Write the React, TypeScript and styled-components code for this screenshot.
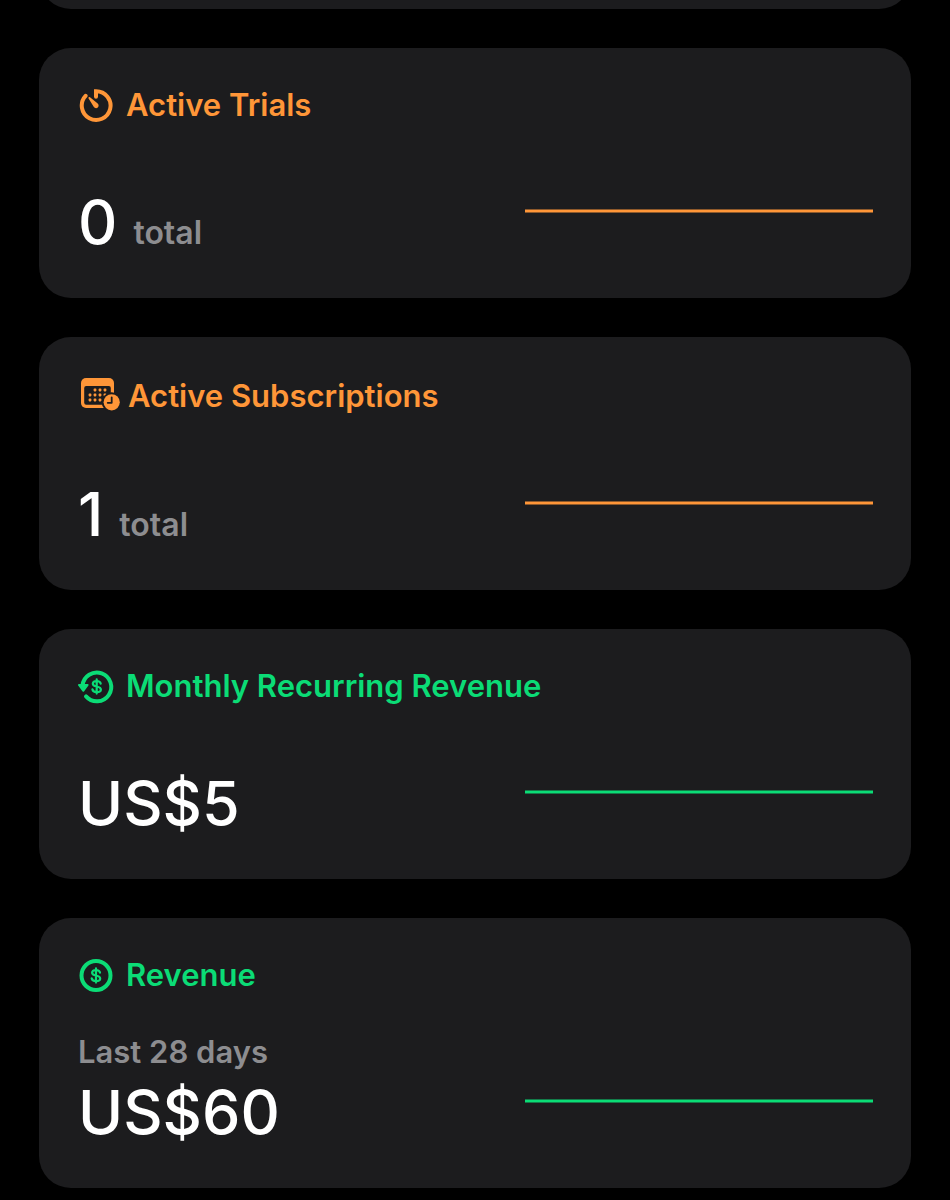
import React from "react";
import styled, { createGlobalStyle } from "styled-components";

const ORANGE = "#ff9638";
const GREEN = "#0bdc76";
const SURFACE = "#1c1c1e";

const GlobalStyle = createGlobalStyle`
  *, *::before, *::after {
    box-sizing: border-box;
  }
  body {
    margin: 0;
    background: #000;
    color: #fff;
    font-family: Inter, "Liberation Sans", sans-serif;
  }
`;

const Page = styled.main`
  display: flex;
  flex-direction: column;
  gap: 39px;
  padding: 0 39px 39px;
`;

const ScrolledAway = styled.div`
  display: flex;
  align-items: flex-end;
  height: 9px;
  overflow: hidden;
`;

const Card = styled.section`
  padding: 39px 38px 39px 39px;
  border-radius: 32px;
  background: ${SURFACE};
`;

const CardEdge = styled.div`
  flex: 1;
  height: 80px;
  border-radius: 32px;
  background: ${SURFACE};
`;

const Heading = styled.h2<{ $color: string }>`
  display: flex;
  align-items: center;
  gap: 8px;
  margin: 0 0 40px;
  color: ${(p) => p.$color};
  font-size: 31px;
  font-weight: 600;
  line-height: 36px;
`;

const Icon = styled.svg`
  display: block;
  flex: none;
`;

const Body = styled.div`
  display: flex;
  align-items: flex-end;
  justify-content: space-between;
`;

const Period = styled.p`
  margin: 0 0 4px;
  color: #8d8d90;
  font-size: 31px;
  font-weight: 600;
  line-height: 38px;
`;

const Amount = styled.p`
  display: flex;
  align-items: baseline;
  gap: 16px;
  margin: 0;
  font-size: 61px;
  font-weight: 500;
  line-height: 74px;
`;

const Unit = styled.span`
  color: #8d8d90;
  font-size: 32px;
  font-weight: 600;
  line-height: 38px;
`;

const Chart = styled.svg`
  display: block;
  flex: none;
  width: 43.8%;
  height: 96px;
`;

function TimerIcon() {
  return (
    <Icon width="40" height="36" viewBox="0 0 40 36" fill="none" aria-hidden="true">
      <path
        d="M7.6 8.8A14.4 14.4 0 1 0 18 4.200v5.600"
        stroke="currentColor"
        strokeWidth="4"
        strokeLinecap="round"
        strokeLinejoin="miter"
      />
      <path
        d="M12 10.2c-.9-.8-2.1.3-1.4 1.3l5.100 8.300c1 1.600 2.900 1.800 4.100.700 1.200-1.200 1.100-3.200-.400-4.300z"
        fill="currentColor"
      />
    </Icon>
  );
}

function CalendarClockIcon() {
  const dots = [
    [17, 14], [22, 14], [27, 14],
    [12, 19], [17, 19], [22, 19], [27, 19],
    [12, 24], [17, 24], [22, 24],
  ];
  return (
    <Icon width="42" height="39" viewBox="0 0 42 39" fill="none" aria-hidden="true">
      <rect x="3" y="2" width="33" height="30" rx="5" fill="currentColor" />
      <rect x="6.200" y="10" width="26.600" height="18.800" rx="2" fill={SURFACE} />
      {dots.map(([x, y]) => (
        <rect key={`${x}-${y}`} x={x - 1.4} y={y - 1.4} width="2.800" height="2.800" rx=".8" fill="currentColor" />
      ))}
      <circle cx="33.700" cy="26.300" r="10" fill={SURFACE} />
      <circle cx="33.700" cy="26.300" r="8.100" fill="currentColor" />
      <path
        d="M33.700 21.300v5.500h-4"
        stroke={SURFACE}
        strokeWidth="1.800"
        strokeLinecap="round"
        strokeLinejoin="round"
      />
    </Icon>
  );
}

function DollarMark() {
  return (
    <path
      d="M18 11.400v14.200M22 15.600c-.3-1.700-1.900-2.600-4-2.600-2.300 0-3.900 1-3.900 2.700 0 1.600 1.200 2.200 3.900 2.800 2.900.6 4.200 1.200 4.200 2.900 0 1.700-1.700 2.700-4.200 2.700-2.400 0-4-1-4.300-2.800"
      stroke="currentColor"
      strokeWidth="2.200"
      strokeLinecap="round"
    />
  );
}

function RecurringDollarIcon() {
  return (
    <Icon width="40" height="36" viewBox="0 0 40 36" fill="none" aria-hidden="true">
      <path
        d="M4.500 17.500A14.400 14.400 0 1 1 8 28.400"
        stroke="currentColor"
        strokeWidth="4"
        strokeLinecap="round"
      />
      <path d="M.9 17h8.800L5.300 22.900z" fill="currentColor" stroke="currentColor" strokeWidth="1.800" strokeLinejoin="round" />
      <g transform="translate(.7 0)">
        <DollarMark />
      </g>
    </Icon>
  );
}

function DollarIcon() {
  return (
    <Icon width="40" height="36" viewBox="0 0 40 36" fill="none" aria-hidden="true">
      <circle cx="18" cy="18.500" r="14.500" stroke="currentColor" strokeWidth="4" />
      <DollarMark />
    </Icon>
  );
}

interface Metric {
  title: string;
  color: string;
  icon: React.ReactNode;
  value: string;
  unit?: string;
  period?: string;
}

const metrics: Metric[] = [
  { title: "Active Trials", color: ORANGE, icon: <TimerIcon />, value: "0", unit: "total" },
  { title: "Active Subscriptions", color: ORANGE, icon: <CalendarClockIcon />, value: "1", unit: "total" },
  { title: "Monthly Recurring Revenue", color: GREEN, icon: <RecurringDollarIcon />, value: "US$5" },
  { title: "Revenue", color: GREEN, icon: <DollarIcon />, value: "US$60", period: "Last 28 days" },
];

function MetricCard({ title, color, icon, value, unit, period }: Metric) {
  return (
    <Card>
      <Heading $color={color}>
        {icon}
        {title}
      </Heading>
      <Body>
        <div>
          {period && <Period>{period}</Period>}
          <Amount>
            {value}
            {unit && <Unit>{unit}</Unit>}
          </Amount>
        </div>
        <Chart viewBox="0 0 100 96" preserveAspectRatio="none" aria-hidden="true">
          <line x1="0" y1="48" x2="100" y2="48" stroke={color} strokeWidth="3" />
        </Chart>
      </Body>
    </Card>
  );
}

export default function App() {
  return (
    <>
      <GlobalStyle />
      <Page>
        <ScrolledAway>
          <CardEdge />
        </ScrolledAway>
        {metrics.map((metric) => (
          <MetricCard key={metric.title} {...metric} />
        ))}
      </Page>
    </>
  );
}
